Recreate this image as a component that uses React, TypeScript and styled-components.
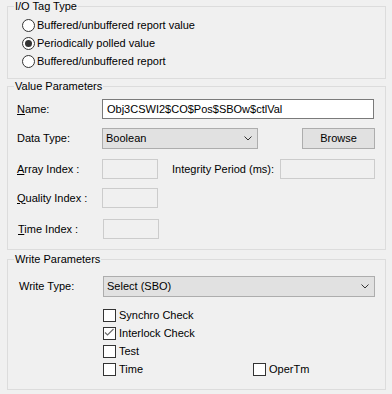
import React from 'react';
import styled, { createGlobalStyle } from 'styled-components';

const GlobalStyle = createGlobalStyle`
  html,
  body {
    margin: 0;
    padding: 0;
    background: #f0f0f0;
  }
  body {
    font-family: 'Liberation Sans', Arial, sans-serif;
    font-size: 11px;
    line-height: 13px;
    color: #000;
  }
`;

const Chevron = () => (
  <svg width="8" height="5" viewBox="0 0 8 5">
    <polyline points="0.5,0.5 4,4 7.5,0.5" fill="none" stroke="#333" strokeWidth="1" />
  </svg>
);

const Tick = () => (
  <svg width="11" height="11" viewBox="0 0 11 11">
    <polyline points="1,4.5 3.5,7 9.5,1" fill="none" stroke="#6a6a6a" strokeWidth="1.1" />
  </svg>
);

const Radio = ({ label, checked }: { label: string; checked?: boolean }) => (
  <RadioRow>
    <RadioCircle $on={!!checked} />
    <span>{label}</span>
  </RadioRow>
);

const Check = ({ label, checked, width }: { label: string; checked?: boolean; width?: number }) => (
  <CheckItem $w={width}>
    <CheckBox>{checked && <Tick />}</CheckBox>
    <CheckText>{label}</CheckText>
  </CheckItem>
);

export default function App() {
  return (
    <>
      <GlobalStyle />
      <StyledPage>
        <StyledGroup $top={0} $pt={9} $pb={8}>
          <Caption>I/O Tag Type</Caption>
          <Radio label="Buffered/unbuffered report value" />
          <Radio label="Periodically polled value" checked />
          <Radio label="Buffered/unbuffered report" />
        </StyledGroup>

        <StyledGroup $top={7} $pt={12} $pb={10}>
          <Caption>Value Parameters</Caption>
          <FieldRow $mt={0} $h={20}>
            <Label>
              <u>N</u>ame:
            </Label>
            <TextBox>Obj3CSWI2$CO$Pos$SBOw$ctlVal</TextBox>
          </FieldRow>
          <FieldRow $mt={9} $h={21}>
            <Label>Data Type:</Label>
            <ComboBox $w={156}>
              <span>Boolean</span>
              <Chevron />
            </ComboBox>
            <Button>Browse</Button>
          </FieldRow>
          <FieldRow $mt={10} $h={20}>
            <Label>
              <u>A</u>rray Index :
            </Label>
            <DisabledBox $w={56} />
            <SideLabel>Integrity Period (ms):</SideLabel>
            <DisabledBox $w={95} $push />
          </FieldRow>
          <FieldRow $mt={9} $h={20}>
            <Label>
              <u>Q</u>uality Index :
            </Label>
            <DisabledBox $w={56} />
          </FieldRow>
          <FieldRow $mt={11} $h={20}>
            <Label $indent={1} $w={86}>
              <u>T</u>ime Index :
            </Label>
            <DisabledBox $w={56} />
          </FieldRow>
        </StyledGroup>

        <StyledGroup $top={9} $pt={16} $pb={10}>
          <Caption>Write Parameters</Caption>
          <FieldRow $mt={0} $h={21}>
            <Label $indent={2} $w={86}>
              Write Type:
            </Label>
            <ComboBox $w={272}>
              <span>Select (SBO)</span>
              <Chevron />
            </ComboBox>
          </FieldRow>
          <CheckList>
            <Check label="Synchro Check" />
            <Check label="Interlock Check" checked />
            <Check label="Test" />
            <CheckLine>
              <Check label="Time" width={150} />
              <Check label="OperTm" />
            </CheckLine>
          </CheckList>
        </StyledGroup>
      </StyledPage>
    </>
  );
}

const StyledPage = styled.div`
  width: 392px;
  height: 394px;
  box-sizing: border-box;
  padding: 6px 6px 0 7px;
  display: flex;
  flex-direction: column;
`;

const StyledGroup = styled.section<{ $top: number; $pt: number; $pb: number }>`
  position: relative;
  margin-top: ${(p) => p.$top}px;
  padding: ${(p) => p.$pt}px 10px ${(p) => p.$pb}px 9px;
  border: 1px solid #dcdcdc;
  display: flex;
  flex-direction: column;
`;

const Caption = styled.span`
  position: absolute;
  top: -7px;
  left: 6px;
  padding: 0 1px;
  background: #f0f0f0;
  line-height: 13px;
`;

const RadioRow = styled.label`
  display: flex;
  align-items: center;
  gap: 2px;
  height: 18px;
  padding-left: 5px;
`;

const RadioCircle = styled.span<{ $on: boolean }>`
  width: 13px;
  height: 13px;
  box-sizing: border-box;
  border: 1px solid #333;
  border-radius: 50%;
  background: #fff;
  display: flex;
  align-items: center;
  justify-content: center;
  &::after {
    content: '';
    display: ${(p) => (p.$on ? 'block' : 'none')};
    width: 7px;
    height: 7px;
    border-radius: 50%;
    background: #333;
  }
`;

const FieldRow = styled.div<{ $mt: number; $h: number }>`
  display: flex;
  align-items: center;
  height: ${(p) => p.$h}px;
  margin-top: ${(p) => p.$mt}px;
`;

const Label = styled.span<{ $indent?: number; $w?: number }>`
  flex-shrink: 0;
  box-sizing: border-box;
  width: ${(p) => p.$w ?? 85}px;
  padding-left: ${(p) => p.$indent ?? 0}px;
  white-space: nowrap;
`;

const TextBox = styled.div`
  width: 272px;
  height: 20px;
  box-sizing: border-box;
  padding: 0 4px;
  border: 1px solid #7a7a7a;
  background: #fff;
  line-height: 18px;
  white-space: nowrap;
`;

const ComboBox = styled.div<{ $w: number }>`
  width: ${(p) => p.$w}px;
  height: 21px;
  box-sizing: border-box;
  padding: 0 5px 0 3px;
  border: 1px solid #adadad;
  background: #e1e1e1;
  display: flex;
  align-items: center;
  justify-content: space-between;
`;

const Button = styled.div`
  margin-left: auto;
  width: 73px;
  height: 21px;
  box-sizing: border-box;
  border: 1px solid #adadad;
  background: #e1e1e1;
  display: flex;
  align-items: center;
  justify-content: center;
`;

const DisabledBox = styled.div<{ $w: number; $push?: boolean }>`
  width: ${(p) => p.$w}px;
  height: 20px;
  box-sizing: border-box;
  margin-left: ${(p) => (p.$push ? 'auto' : '0')};
  border: 1px solid #cccccc;
  background: #f0f0f0;
`;

const SideLabel = styled.span`
  margin-left: 14px;
  white-space: nowrap;
`;

const CheckList = styled.div`
  margin: 10px 0 0 86px;
  display: flex;
  flex-direction: column;
`;

const CheckLine = styled.div`
  display: flex;
`;

const CheckItem = styled.label<{ $w?: number }>`
  display: flex;
  align-items: flex-start;
  gap: 3px;
  height: 18px;
  width: ${(p) => (p.$w ? `${p.$w}px` : 'auto')};
  padding-top: 2px;
  box-sizing: border-box;
`;

const CheckBox = styled.span`
  width: 13px;
  height: 13px;
  box-sizing: border-box;
  border: 1px solid #333;
  background: #fff;
  display: flex;
  align-items: center;
  justify-content: center;
`;

const CheckText = styled.span`
  line-height: 13px;
`;
